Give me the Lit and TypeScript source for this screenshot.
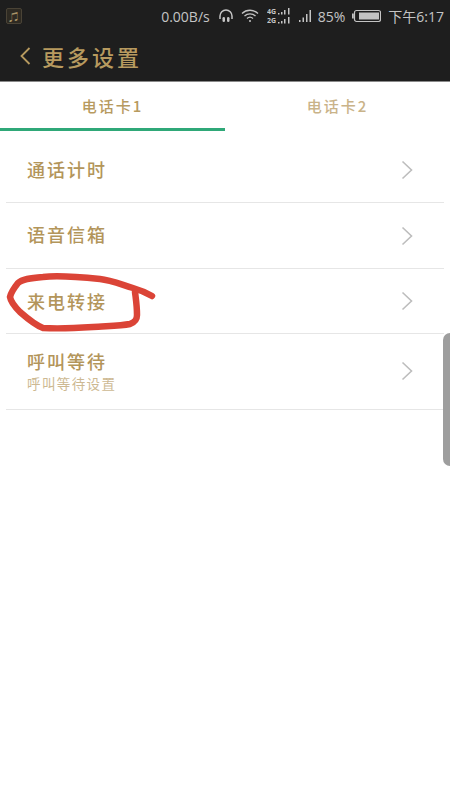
import { LitElement, html, css, svg } from "lit";
import { customElement } from "lit/decorators.js";

const chev = html`<svg class="chev" width="12" height="20" viewBox="0 0 12 20"><path d="M1.5 1.5 10.5 10 1.5 18.5" fill="none" stroke="#bdbdbd" stroke-width="1.6"/></svg>`;

@customElement("app-root")
export class AppRoot extends LitElement {
  static styles = css`
    :host { display: block; width: 450px; height: 800px; position: relative; overflow: hidden; background: #fff;
      font-family: "Noto Sans CJK SC", "Noto Sans", sans-serif; }
    .head { background: #1e1e1e; height: 81px; border-bottom: 1px solid #8a8a8a; box-sizing: content-box; display: flex; flex-direction: column; }
    .status { height: 32px; display: flex; align-items: center; color: #c4c4c4; font-size: 14px; padding: 0 6px 0 6px; font-family: "Open Sans", "Noto Sans CJK SC", sans-serif; }
    .note { width: 16px; height: 16px; box-sizing: border-box; border: 1px solid #4a4336; border-radius: 2px; background: #2e2a22; color: #a89468; font-size: 10px; display: flex; align-items: center; justify-content: center; margin-left: 0; }
    .sp { flex: 1; }
    .speed { margin-right: 8px; }
    .ic { display: block; margin-right: 7px; }
    .wifi { margin-right: 8px; }
    .net { margin-right: 8px; }
    .sig { margin-right: 0; }
    .pct { margin: 0 7px 0 6px; }
    .time { margin-left: 7px; }
    .bar { flex: 1; display: flex; align-items: center; padding: 0 0 1px 20px; color: #b79a5f; font-size: 22px; font-weight: 500; letter-spacing: 3px; }
    .bar svg { margin-right: 11px; }
    .tabs { display: flex; height: 49px; }
    .tab { flex: 1; display: flex; align-items: center; justify-content: center; color: #c9b389; font-size: 15px; font-weight: 500; letter-spacing: 2px; box-sizing: border-box; padding-bottom: 3px; }
    .tab.on { color: #b79a5f; border-bottom: 3px solid #2fa878; padding-bottom: 0; }
    .list { margin: 7px 6px 0; }
    .row { display: flex; align-items: center; justify-content: space-between; height: 65px; border-bottom: 1px solid #e6e6e6; padding: 0 31px 0 21px; box-sizing: border-box; }
    .row.a { height: 66px; }
    .row.b { height: 76px; padding-bottom: 1px; }
    .t { color: #b3955a; font-size: 18px; font-weight: 500; letter-spacing: 2px; line-height: 22px; }
    .t.up1 { margin-bottom: 2px; }
    .t.up2 { margin-bottom: 4px; }
    .s { color: #cdb992; font-size: 13.5px; letter-spacing: 1.4px; line-height: 20px; margin-top: 1px; }
    .scroll { position: absolute; right: 0; top: 333px; width: 7px; height: 133px; background: #9e9e9e; border-radius: 7px 0 0 7px; }
    .ink { position: absolute; left: 0; top: 0; pointer-events: none; }
  `;

  render() {
    return html`
      <div class="head">
        <div class="status">
          <div class="note">♫</div>
          <div class="sp"></div>
          <span class="speed">0.00B/s</span>
          <svg class="ic" width="16" height="16" viewBox="0 0 16 16" fill="none" stroke="#c4c4c4"><path d="M2 11V8a6 6 0 0 1 12 0v3" stroke-width="1.5"/><rect x="4.5" y="9" width="2.5" height="5" rx="1.2" fill="#c4c4c4" stroke="none"/><rect x="9" y="9" width="2.5" height="5" rx="1.2" fill="#c4c4c4" stroke="none"/></svg>
          <svg class="ic wifi" width="18" height="16" viewBox="0 0 18 16" fill="none" stroke="#c4c4c4" stroke-width="1.3"><path d="M1 5.5a11.500 11.500 0 0 1 16 0M3.500 8a8 8 0 0 1 11 0M6 10.500a4.500 4.500 0 0 1 6 0"/><circle cx="9" cy="13" r="1" fill="#c4c4c4" stroke="none"/></svg>
          <svg class="ic net" width="24" height="18" viewBox="0 0 24 18" fill="#c4c4c4"><rect x="11" y="6" width="1.500" height="1.500"/><rect x="14" y="5" width="1.500" height="2.500"/><rect x="17" y="3" width="1.500" height="4.500"/><rect x="21" y="1" width="1.500" height="6.500"/><rect x="11" y="15" width="1.500" height="1.500"/><rect x="14" y="14" width="1.500" height="2.500"/><rect x="17" y="12" width="1.500" height="4.500"/><rect x="21" y="10" width="1.500" height="6.500"/><text x="0" y="7" font-size="7" font-weight="700" font-family="Noto Sans">4G</text><text x="0" y="16" font-size="7" font-weight="700" font-family="Noto Sans">2G</text></svg>
          <svg class="ic sig" width="13" height="16" viewBox="0 0 13 16" fill="#c4c4c4"><rect x="0" y="12" width="1.500" height="2"/><rect x="3.500" y="9.500" width="1.500" height="4.500"/><rect x="7" y="6" width="1.500" height="8"/><rect x="10.500" y="2" width="1.500" height="12"/></svg>
          <span class="pct">85%</span>
          <svg width="29" height="14" viewBox="0 0 29 14"><rect x="2.500" y="1.500" width="26" height="11" rx="2" fill="none" stroke="#c4c4c4" stroke-width="1.200"/><rect x="0" y="4.500" width="1.800" height="5" fill="#c4c4c4"/><rect x="7" y="3.500" width="20" height="7" fill="#c4c4c4"/></svg>
          <span class="time">下午6:17</span>
        </div>
        <div class="bar">
          <svg width="11" height="18" viewBox="0 0 11 18"><path d="M9.500 1 1.500 9l8 8" fill="none" stroke="#b79a5f" stroke-width="1.800"/></svg>
          <span>更多设置</span>
        </div>
      </div>
      <div class="tabs">
        <div class="tab on">电话卡1</div>
        <div class="tab">电话卡2</div>
      </div>
      <div class="list">
        <div class="row"><span class="t up1">通话计时</span>${chev}</div>
        <div class="row a"><span class="t up2">语音信箱</span>${chev}</div>
        <div class="row"><span class="t">来电转接</span>${chev}</div>
        <div class="row b"><div><div class="t">呼叫等待</div><div class="s">呼叫等待设置</div></div>${chev}</div>
      </div>
      <div class="scroll"></div>
      <svg class="ink" width="450" height="800" viewBox="0 0 450 800">
        ${svg`<path d="M152 296C145 292 140 290 133 288C120 284 110 280 100 279C80 277 60 275 43 277C30 278 22 279 18 283C14 288 11 292 10 297C11 303 16 308 20 312C28 319 35 325 43 328C60 329 78 328 93 327C105 326 120 326 130 324C135 322 137 320 137 315C137 306 136 300 135 292" fill="none" stroke="#db4437" stroke-width="6.500" stroke-linecap="round" stroke-linejoin="round"/>`}
      </svg>
    `;
  }
}
